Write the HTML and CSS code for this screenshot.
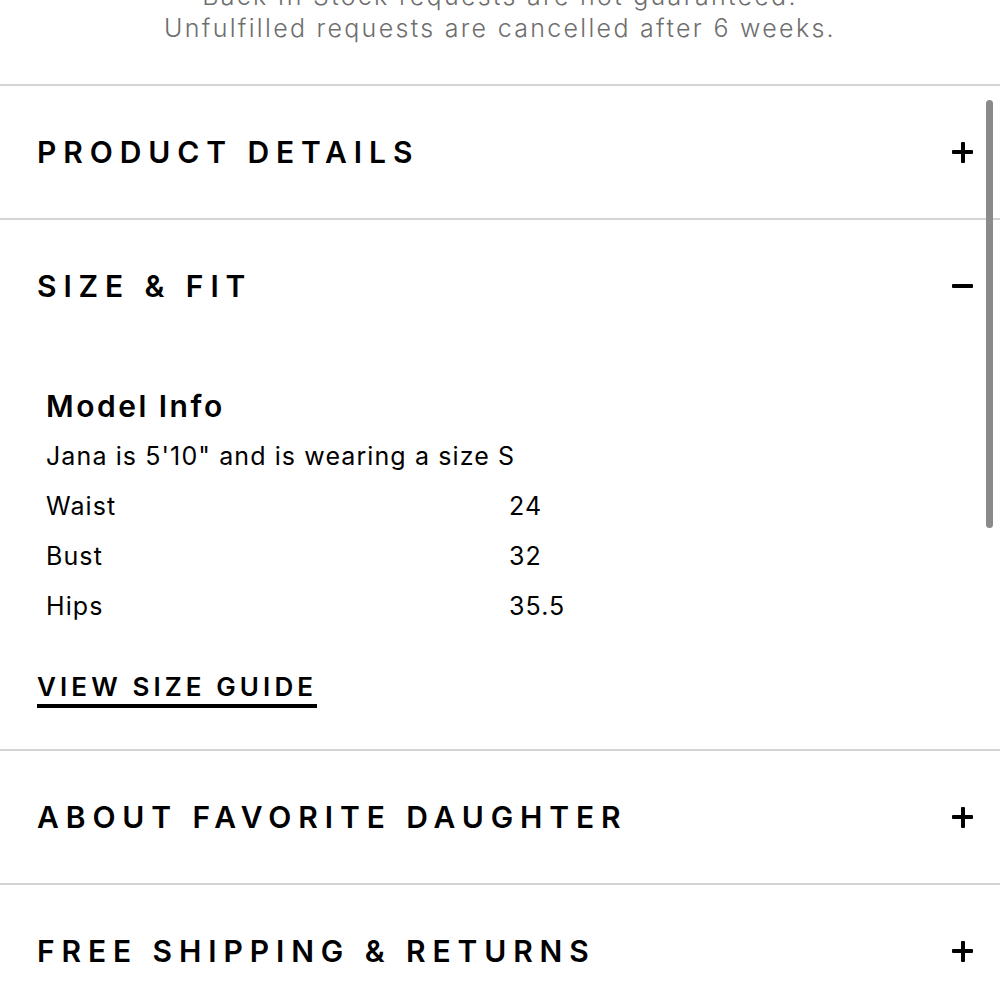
FILE: index.html
```html
<!DOCTYPE html>
<html>
<head>
<meta charset="utf-8">
<link rel="stylesheet" href="styles.css">
</head>
<body>
<div class="page">
  <div class="notice">
    <p class="notice-line">Back In Stock requests are not guaranteed.</p>
    <p class="notice-line">Unfulfilled requests are cancelled after 6 weeks.</p>
  </div>
  <section class="acc">
    <div class="acc-head"><span class="acc-title">PRODUCT DETAILS</span><span class="icon plus"></span></div>
  </section>
  <section class="acc open">
    <div class="acc-head"><span class="acc-title">SIZE &amp; FIT</span><span class="icon minus"></span></div>
    <div class="acc-body">
      <div class="model">
        <div class="model-title">Model Info</div>
        <div class="model-line">Jana is 5'10" and is wearing a size S</div>
        <div class="meas"><span class="meas-k">Waist</span><span class="meas-v">24</span></div>
        <div class="meas"><span class="meas-k">Bust</span><span class="meas-v">32</span></div>
        <div class="meas"><span class="meas-k">Hips</span><span class="meas-v">35.5</span></div>
      </div>
      <a class="guide">VIEW SIZE GUIDE</a>
    </div>
  </section>
  <section class="acc">
    <div class="acc-head"><span class="acc-title">ABOUT FAVORITE DAUGHTER</span><span class="icon plus"></span></div>
  </section>
  <section class="acc">
    <div class="acc-head"><span class="acc-title">FREE SHIPPING &amp; RETURNS</span><span class="icon plus"></span></div>
  </section>
  <div class="scrollbar"></div>
</div>
</body>
</html>
```
FILE: styles.css
```css
html, body {
  margin: 0;
  padding: 0;
  background: #fff;
}
body {
  font-family: Inter, "Noto Sans", sans-serif;
  color: #000;
  overflow: hidden;
}
.page {
  position: relative;
  width: 1000px;
  height: 1000px;
  overflow: hidden;
}
.notice {
  display: flex;
  flex-direction: column;
  align-items: center;
  margin-top: -20px;
  padding-bottom: 40px;
}
.notice-line {
  margin: 0;
  font-size: 25px;
  line-height: 32px;
  color: #6e6e6e;
  font-weight: 300;
  letter-spacing: 2.3px;
}
.acc {
  border-top: 2px solid #d4d4d4;
}
.acc-head {
  height: 132px;
  display: flex;
  align-items: center;
  justify-content: space-between;
  padding: 0 27px 0 37px;
}
.acc-title {
  font-size: 30px;
  font-weight: 600;
  letter-spacing: 6.9px;
}
.icon {
  position: relative;
  width: 21px;
  height: 21px;
}
.icon::before, .plus::after {
  content: "";
  position: absolute;
  background: #000;
  border-radius: 1px;
}
.icon::before {
  left: 0;
  top: 8.5px;
  width: 21px;
  height: 4px;
}
.plus::after {
  top: 0;
  left: 8.5px;
  width: 4px;
  height: 21px;
}
.acc-body {
  padding: 29px 0 41px 37px;
}
.model {
  padding-left: 9px;
}
.model-title {
  font-size: 30px;
  font-weight: 600;
  line-height: 50px;
  letter-spacing: 2.5px;
}
.model-line, .meas {
  font-size: 25px;
  line-height: 50px;
  font-weight: 400;
  letter-spacing: 1.1px;
}
.meas {
  display: flex;
}
.meas-k {
  width: 463px;
}
.guide {
  display: inline-block;
  margin-top: 41px;
  font-size: 26px;
  font-weight: 600;
  letter-spacing: 4.1px;
  line-height: 30px;
  padding-bottom: 2px;
  border-bottom: 4px solid #000;
}
.scrollbar {
  position: absolute;
  right: 7px;
  top: 100px;
  width: 7px;
  height: 428px;
  border-radius: 3.5px;
  background: #8a8a8a;
}
```
